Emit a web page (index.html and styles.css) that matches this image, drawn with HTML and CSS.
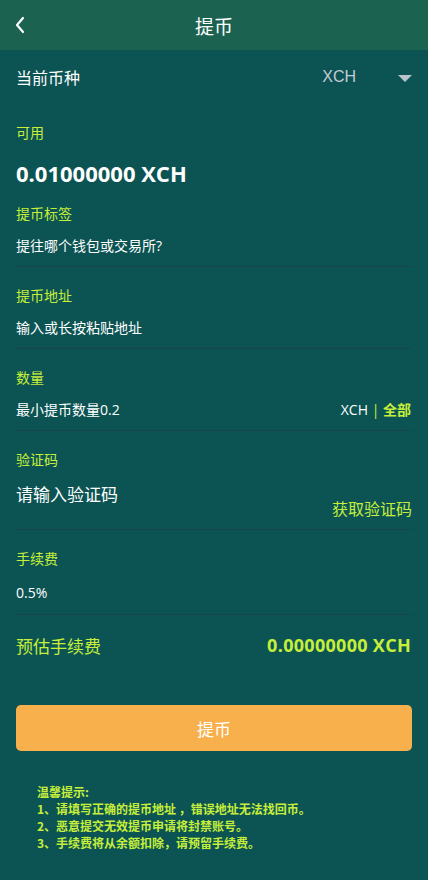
FILE: index.html
```html
<!DOCTYPE html>
<html lang="zh-CN">
<head>
<meta charset="utf-8">
<meta name="viewport" content="width=device-width, initial-scale=1">
<title>提币</title>
<link rel="stylesheet" href="styles.css">
</head>
<body>
<header class="topbar">
  <span class="back">
    <svg width="12" height="18" viewBox="0 0 12 18"><path d="M9 2 L3 9 L9 16" fill="none" stroke="#ffffff" stroke-width="2.2" stroke-linecap="round" stroke-linejoin="round"/></svg>
  </span>
  <h1 class="title">提币</h1>
</header>
<main class="content">
  <div class="coin-row">
    <span class="coin-label">当前币种</span>
    <span class="coin-select">
      <span class="coin-name">XCH</span>
      <span class="caret"></span>
    </span>
  </div>

  <div class="avail">
    <div class="label">可用</div>
    <div class="balance">0.01000000 XCH</div>
  </div>

  <div class="field">
    <div class="label">提币标签</div>
    <div class="value">提往哪个钱包或交易所?</div>
  </div>

  <div class="field">
    <div class="label">提币地址</div>
    <div class="value">输入或长按粘贴地址</div>
  </div>

  <div class="field">
    <div class="label">数量</div>
    <div class="value split">
      <span>最小提币数量0.2</span>
      <span class="unit">XCH <span class="bar">|</span> <b class="all">全部</b></span>
    </div>
  </div>

  <div class="field code-field">
    <div class="label">验证码</div>
    <div class="code-row">
      <span class="code-input">请输入验证码</span>
      <span class="code-btn">获取验证码</span>
    </div>
  </div>

  <div class="field fee-field">
    <div class="label">手续费</div>
    <div class="value">0.5%</div>
  </div>

  <div class="est-row">
    <span>预估手续费</span>
    <b class="est-amount">0.00000000 XCH</b>
  </div>

  <button class="submit">提币</button>

  <div class="tips">
    <p>温馨提示:</p>
    <p>1、请填写正确的提币地址 ，错误地址无法找回币。</p>
    <p>2、恶意提交无效提币申请将封禁账号。</p>
    <p>3、手续费将从余额扣除，请预留手续费。</p>
  </div>
</main>
</body>
</html>
```

FILE: styles.css
```css
* { box-sizing: border-box; }
html, body {
  margin: 0;
  padding: 0;
}
body {
  background: #0c5454;
  color: #ffffff;
  font-family: "Open Sans", "Noto Sans CJK SC", sans-serif;
  min-height: 880px;
}
.topbar {
  height: 50px;
  background: #1b6350;
  display: flex;
  align-items: center;
  justify-content: center;
  position: relative;
}
.back {
  position: absolute;
  left: 14px;
  top: 16px;
  display: flex;
}
.title {
  margin: 0;
  font-size: 19px;
  font-weight: normal;
  font-family: "Noto Sans CJK SC", sans-serif;
}
.content {
  padding: 0 16px;
}
.coin-row {
  height: 54px;
  display: flex;
  align-items: center;
  justify-content: space-between;
  font-family: "Noto Sans CJK SC", sans-serif;
  font-size: 16px;
}
.coin-select {
  display: flex;
  align-items: center;
}
.coin-name {
  font-family: "Liberation Sans", "Noto Sans CJK SC", sans-serif;
  color: #c3cbd6;
  font-size: 16px;
  margin-right: 42px;
}
.caret {
  width: 0;
  height: 0;
  border-left: 7px solid transparent;
  border-right: 7px solid transparent;
  border-top: 7px solid #b9c5cc;
  margin-top: 2px;
}
.label {
  font-size: 14px;
  line-height: 20px;
  color: #c6ee3a;
  font-family: "Noto Sans CJK SC", sans-serif;
}
.avail {
  padding-top: 18px;
}
.balance {
  margin-top: 19px;
  font-size: 22px;
  font-weight: bold;
  line-height: 24px;
}
.field {
  padding: 18px 0 10px;
  border-bottom: 1px solid #1b4649;
}
.value {
  margin-top: 13px;
  font-size: 14px;
  line-height: 20px;
  font-family: "Open Sans", "Noto Sans CJK SC", sans-serif;
}
.split {
  display: flex;
  justify-content: space-between;
}
.unit {
  font-size: 14px;
  margin-right: 1px;
}
.bar {
  color: #c6ee3a;
}
.all {
  color: #c6ee3a;
  font-weight: bold;
}
.code-row {
  margin-top: 12px;
  height: 38px;
  display: flex;
  justify-content: space-between;
  font-family: "Noto Sans CJK SC", sans-serif;
}
.code-input {
  font-size: 17px;
  line-height: 26px;
  align-self: flex-start;
}
.code-btn {
  font-size: 16px;
  line-height: 22px;
  color: #c6ee3a;
  align-self: flex-end;
}
.fee-field .value {
  margin-top: 15px;
  padding-bottom: 1px;
}
.est-row {
  margin-top: 15px;
  height: 30px;
  display: flex;
  align-items: center;
  justify-content: space-between;
  color: #c6ee3a;
  font-size: 17px;
  font-family: "Noto Sans CJK SC", sans-serif;
}
.est-amount {
  font-family: "Open Sans", sans-serif;
  font-weight: bold;
  font-size: 18px;
  letter-spacing: 0.3px;
  margin-right: 1px;
}
.submit {
  display: block;
  width: 100%;
  height: 46px;
  margin-top: 45px;
  border: none;
  border-radius: 5px;
  background: #f8b04c;
  color: #ffffff;
  font-size: 17px;
  font-family: "Noto Sans CJK SC", sans-serif;
}
.tips {
  margin-top: 32px;
  padding-left: 21px;
  color: #c6ee3a;
  font-weight: bold;
  font-size: 12px;
  line-height: 17px;
  font-family: "Noto Sans CJK SC", sans-serif;
}
.tips p {
  margin: 0;
}
```
